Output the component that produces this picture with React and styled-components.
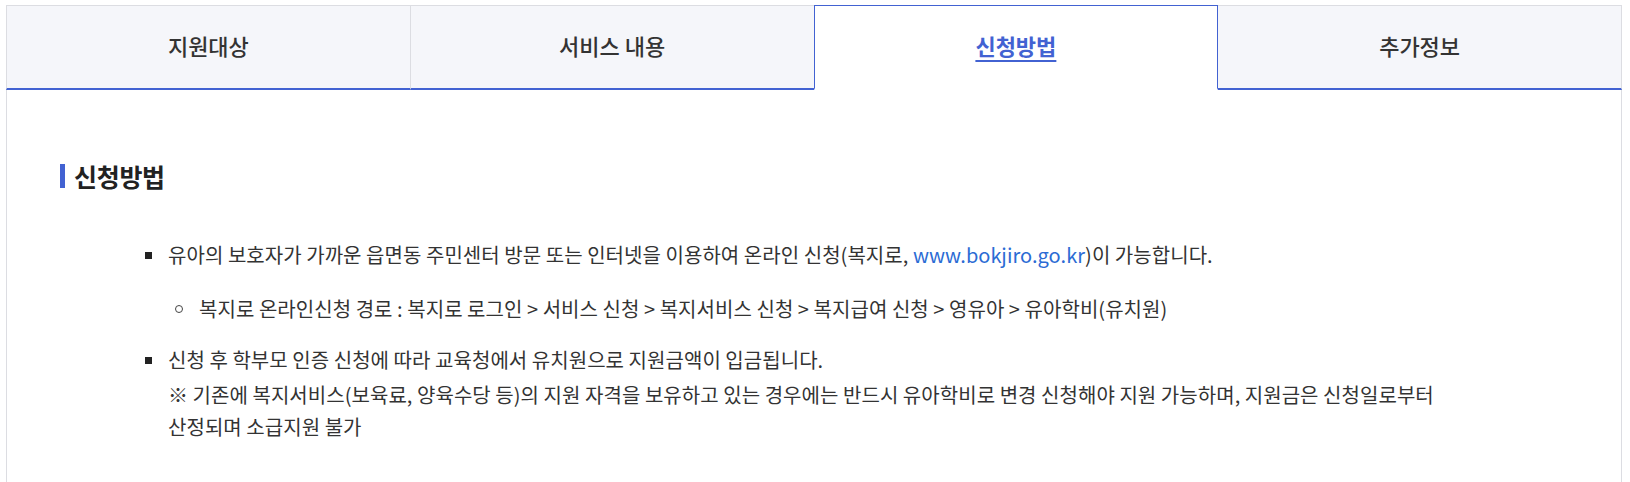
import React from "react";
import styled, { createGlobalStyle } from "styled-components";

const Global = createGlobalStyle`
  html, body { margin: 0; padding: 0; background: #fff; }
  body { font-family: "Noto Sans CJK KR", "Noto Sans", sans-serif; color: #333; }
`;

const BLUE = "#4262d2";

const Page = styled.div`
  padding: 5px 8px 0 6px;
`;

const TabBar = styled.ul`
  display: flex;
  margin: 0;
  padding: 0;
  list-style: none;
`;

const Tab = styled.li`
  flex: 1;
  height: 85px;
  box-sizing: border-box;
  display: flex;
  align-items: center;
  justify-content: center;
  padding-bottom: 4px;
  font-size: 22px;
  letter-spacing: 0;
  background: ${(p) => (p.$active ? "#fff" : "#f5f6fa")};
  border-top: 1px solid ${(p) => (p.$active ? BLUE : "#dcdde2")};
  border-left: 1px solid ${(p) => (p.$active ? BLUE : "#dcdde2")};
  border-right: ${(p) => (p.$active ? `1px solid ${BLUE}` : p.$last ? "1px solid #dcdde2" : "0")};
  border-bottom: ${(p) => (p.$active ? "2px solid transparent" : `2px solid ${BLUE}`)};
  ${(p) => p.$active && `+ li { border-left: 0; }`}
  color: ${(p) => (p.$active ? BLUE : "#333")};
  font-weight: ${(p) => (p.$active ? 700 : 500)};
  text-decoration: ${(p) => (p.$active ? "underline" : "none")};
  text-underline-offset: 5px;
  text-decoration-thickness: 2px;
`;

const Panel = styled.section`
  border-left: 1px solid #dcdde2;
  border-right: 1px solid #dcdde2;
  padding: 70px 54px 40px 53px;
  min-height: 320px;
`;

const Heading = styled.h3`
  display: flex;
  align-items: center;
  gap: 9px;
  margin: 0 0 47px;
  font-size: 25px;
  line-height: 32px;
  font-weight: 700;
  color: #222;
  letter-spacing: -0.3px;
  &::before {
    content: "";
    width: 5px;
    height: 24px;
    background: ${BLUE};
  }
`;

const List = styled.ul`
  margin: 0;
  padding: 0 0 0 108px;
  list-style: none;
`;

const Item = styled.li`
  position: relative;
  font-size: 20px;
  line-height: 32px;
  letter-spacing: 0.05px;
  color: #333;
  margin-bottom: 19px;
  word-break: keep-all;
  &::before {
    content: "";
    position: absolute;
    left: -23px;
    top: 13px;
    width: 7px;
    height: 7px;
    background: #222;
  }
`;

const SubList = styled.ul`
  margin: 22px 0 0;
  padding: 0 0 0 31px;
  list-style: none;
`;

const SubItem = styled.li`
  position: relative;
  &::before {
    content: "";
    position: absolute;
    left: -24px;
    top: 12px;
    width: 6px;
    height: 6px;
    border: 1px solid #444;
    border-radius: 50%;
  }
`;

const Link = styled.a`
  color: #2b6bd4;
  text-decoration: none;
`;

const Note = styled.p`
  margin: 3px 0 0;
  max-width: 1320px;
`;

export default function App() {
  const tabs = ["지원대상", "서비스 내용", "신청방법", "추가정보"];
  return (
    <Page>
      <Global />
      <TabBar>
        {tabs.map((t, i) => (
          <Tab key={t} $active={i === 2} $last={i === tabs.length - 1}>
            {t}
          </Tab>
        ))}
      </TabBar>
      <Panel>
        <Heading>신청방법</Heading>
        <List>
          <Item>
            유아의 보호자가 가까운 읍면동 주민센터 방문 또는 인터넷을 이용하여 온라인 신청(복지로,{" "}
            <Link href="#">www.bokjiro.go.kr</Link>)이 가능합니다.
            <SubList>
              <SubItem>
                복지로 온라인신청 경로 : 복지로 로그인 &gt; 서비스 신청 &gt; 복지서비스 신청 &gt; 복지급여 신청 &gt; 영유아 &gt; 유아학비(유치원)
              </SubItem>
            </SubList>
          </Item>
          <Item>
            신청 후 학부모 인증 신청에 따라 교육청에서 유치원으로 지원금액이 입금됩니다.
            <Note>
              ※ 기존에 복지서비스(보육료, 양육수당 등)의 지원 자격을 보유하고 있는 경우에는 반드시 유아학비로 변경 신청해야 지원 가능하며, 지원금은 신청일로부터 산정되며 소급지원 불가
            </Note>
          </Item>
        </List>
      </Panel>
    </Page>
  );
}
